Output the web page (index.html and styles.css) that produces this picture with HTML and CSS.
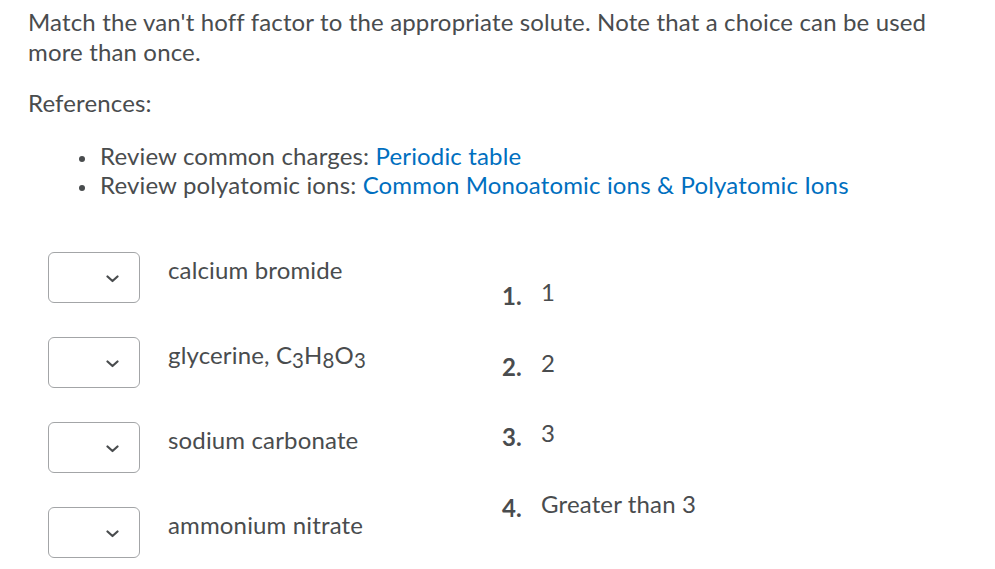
FILE: index.html
```html
<!DOCTYPE html>
<html>
<head>
<meta charset="utf-8">
<link rel="stylesheet" href="styles.css">
</head>
<body>
<div class="page">
  <p class="prompt">Match the van't hoff factor to the appropriate solute. Note that a choice can be used more than once.</p>
  <p class="refs-title">References:</p>
  <ul class="refs">
    <li>Review common charges: <a href="#">Periodic table</a></li>
    <li>Review polyatomic ions: <a href="#">Common Monoatomic ions &amp; Polyatomic Ions</a></li>
  </ul>
  <div class="match">
    <div class="items">
      <div class="item">
        <div class="select"><svg width="13" height="8" viewBox="0 0 13 8"><path d="M1.5 1.5 L6.5 6 L11.5 1.5" fill="none" stroke="#494c4e" stroke-width="2.2" stroke-linecap="round" stroke-linejoin="round"/></svg></div>
        <div class="label">calcium bromide</div>
      </div>
      <div class="item">
        <div class="select"><svg width="13" height="8" viewBox="0 0 13 8"><path d="M1.5 1.5 L6.5 6 L11.5 1.5" fill="none" stroke="#494c4e" stroke-width="2.2" stroke-linecap="round" stroke-linejoin="round"/></svg></div>
        <div class="label">glycerine, C<sub>3</sub>H<sub>8</sub>O<sub>3</sub></div>
      </div>
      <div class="item">
        <div class="select"><svg width="13" height="8" viewBox="0 0 13 8"><path d="M1.5 1.5 L6.5 6 L11.5 1.5" fill="none" stroke="#494c4e" stroke-width="2.2" stroke-linecap="round" stroke-linejoin="round"/></svg></div>
        <div class="label">sodium carbonate</div>
      </div>
      <div class="item">
        <div class="select"><svg width="13" height="8" viewBox="0 0 13 8"><path d="M1.5 1.5 L6.5 6 L11.5 1.5" fill="none" stroke="#494c4e" stroke-width="2.2" stroke-linecap="round" stroke-linejoin="round"/></svg></div>
        <div class="label">ammonium nitrate</div>
      </div>
    </div>
    <ol class="choices">
      <li><span class="num">1.</span><span class="val">1</span></li>
      <li><span class="num">2.</span><span class="val">2</span></li>
      <li><span class="num">3.</span><span class="val">3</span></li>
      <li><span class="num">4.</span><span class="val">Greater than 3</span></li>
    </ol>
  </div>
</div>
</body>
</html>
```
FILE: styles.css
```css
html, body {
  margin: 0;
  padding: 0;
  background: #ffffff;
}
body {
  font-family: Lato, "Open Sans", sans-serif;
  font-size: 24px;
  letter-spacing: 0.15px;
  color: #494c4e;
}
.page {
  padding: 7px 28px 0 28px;
}
p {
  margin: 0;
  line-height: 30px;
}
.prompt {
  width: 910px;
}
.refs-title {
  margin-top: 21px;
}
.refs {
  list-style: none;
  margin: 23px 0 0 0;
  padding-left: 72px;
  line-height: 29px;
}
.refs li::before {
  content: "";
  display: inline-block;
  width: 6px;
  height: 6px;
  border-radius: 50%;
  background: #494c4e;
  margin-left: -21px;
  margin-right: 15px;
  vertical-align: middle;
}
.refs a {
  color: #006fbf;
  text-decoration: none;
}
.match {
  display: flex;
  margin-top: 53px;
  margin-left: 20px;
}
.items {
  width: 454px;
  display: flex;
  flex-direction: column;
  gap: 34px;
}
.item {
  display: flex;
  align-items: flex-start;
  gap: 28px;
}
.select {
  height: 49px;
  border: 1px solid #a3a5a7;
  border-radius: 6px;
  display: flex;
  align-items: center;
  justify-content: flex-end;
  padding-right: 20px;
  box-sizing: content-box;
  width: 70px;
}
.select svg {
  display: block;
  margin-top: 2px;
}
.label {
  padding-top: 3px;
  line-height: 30px;
}
.label sub {
  font-size: 0.85em;
  vertical-align: -0.18em;
  line-height: 0;
}
.choices {
  list-style: none;
  margin: 25px 0 0 0;
  padding: 0;
  display: flex;
  flex-direction: column;
  gap: 40.7px;
}
.choices li {
  display: flex;
  line-height: 30px;
  height: 30px;
}
.num {
  width: 39px;
  font-weight: bold;
  position: relative;
  top: 4px;
}
```
